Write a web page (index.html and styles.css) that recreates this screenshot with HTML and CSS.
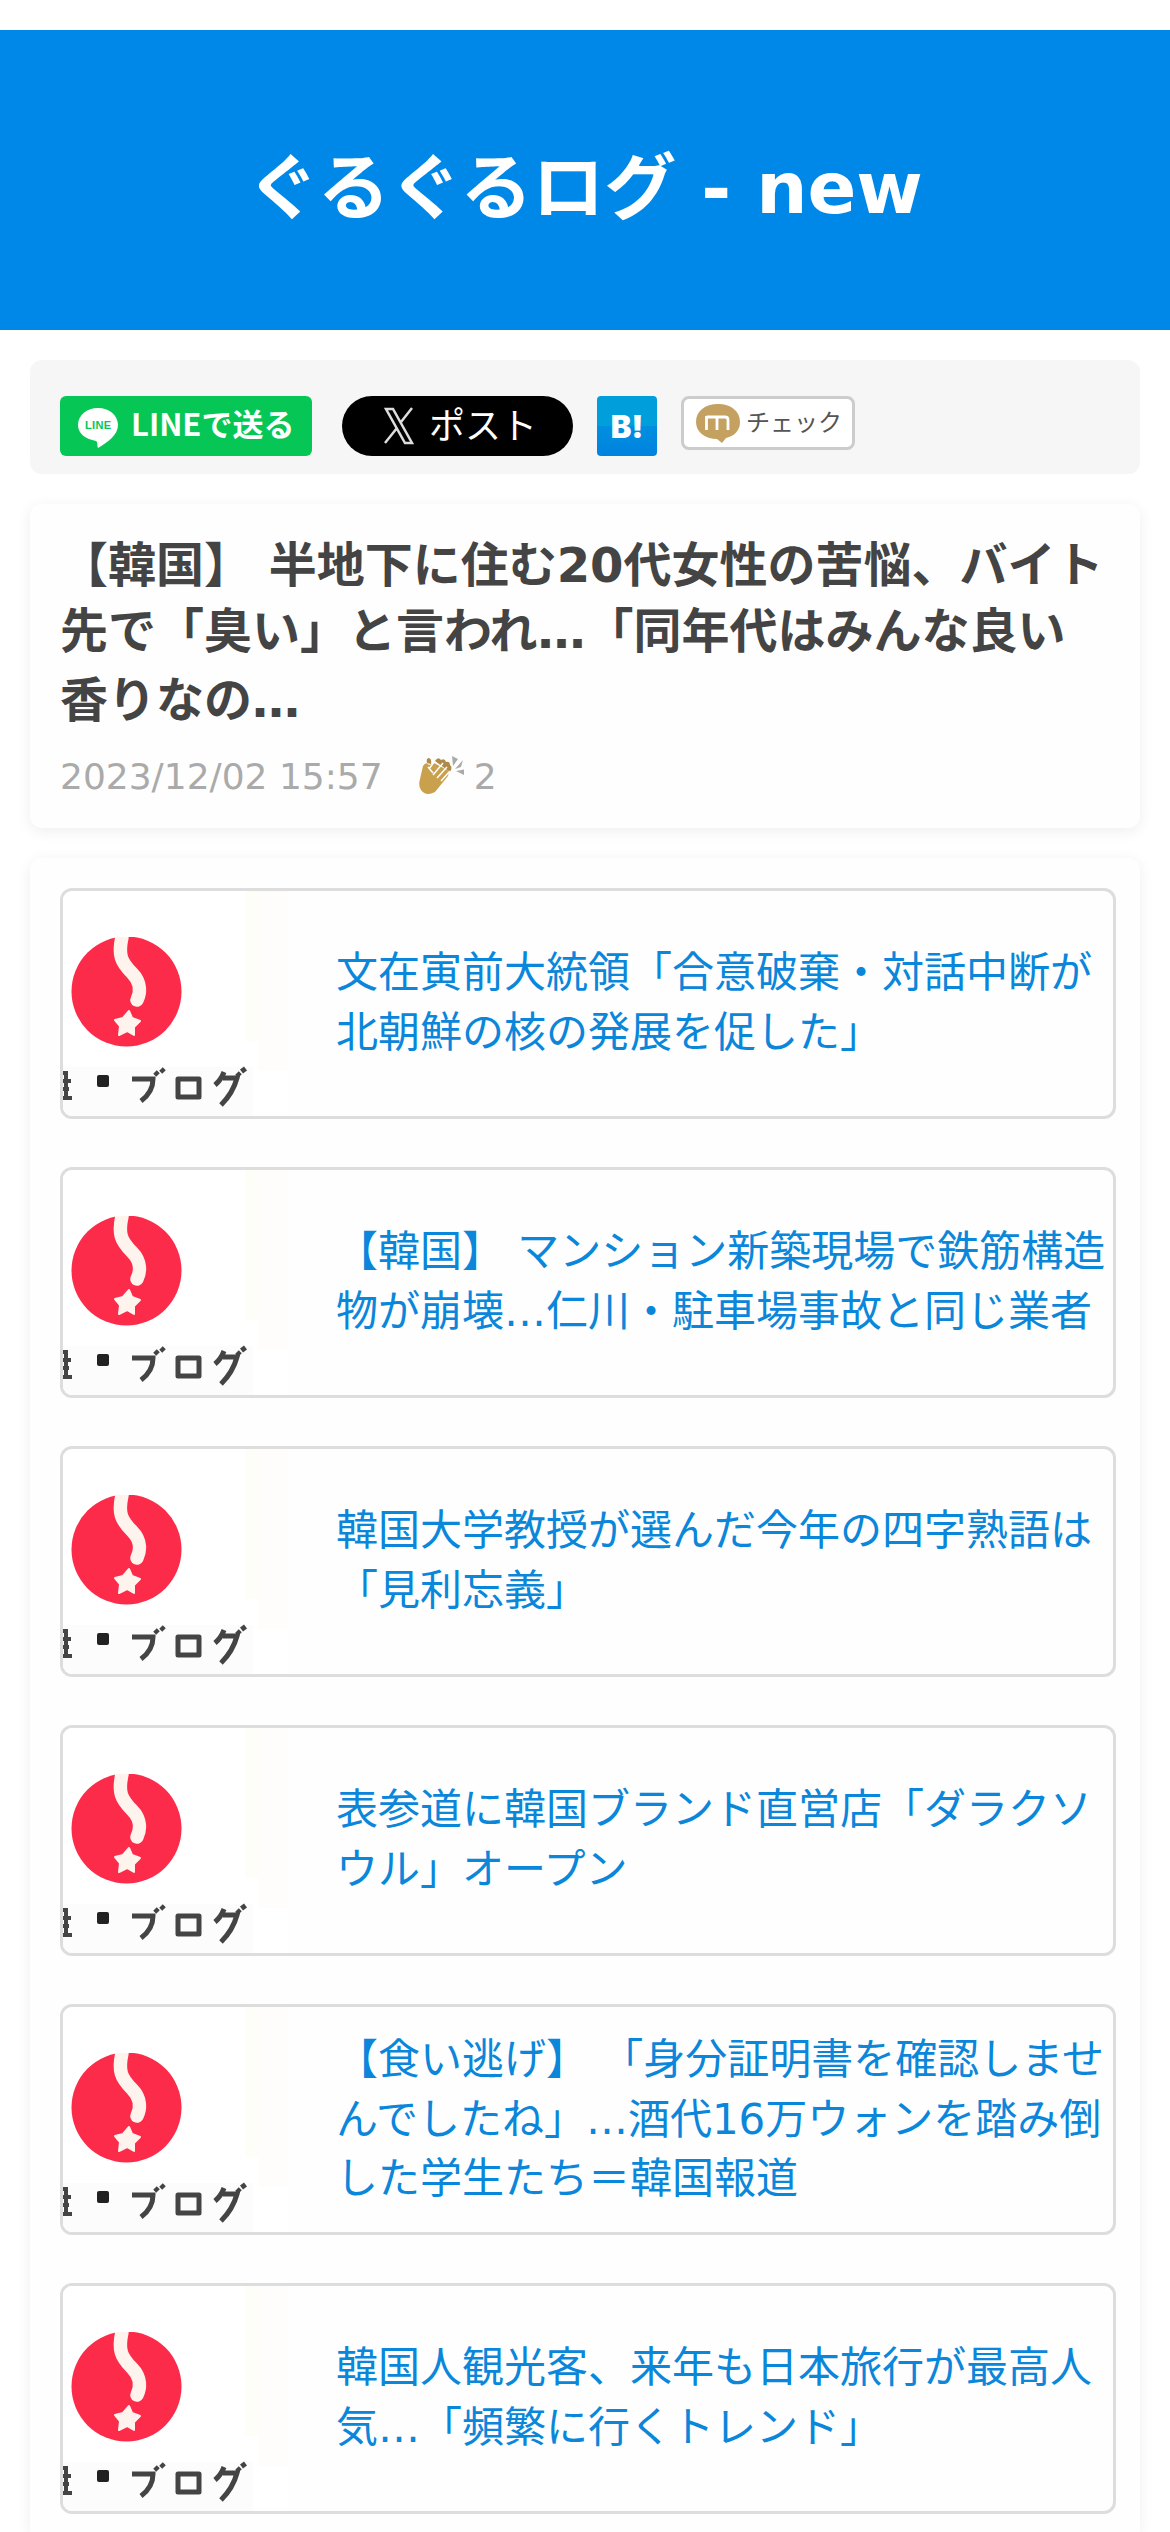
FILE: index.html
```html
<!DOCTYPE html>
<html lang="ja">
<head>
<meta charset="utf-8">
<title>ぐるぐるログ - new</title>
<link rel="stylesheet" href="styles.css">
</head>
<body>
<svg class="defs" width="0" height="0" aria-hidden="true">
  <symbol id="thumb" viewBox="0 0 225 225">
    <rect width="225" height="225" fill="#fff"/>
    <rect x="182" width="13" height="150" fill="#fefef9"/>
    <rect x="195" width="31" height="180" fill="#fffcfc"/>
    <rect y="176" width="190" height="49" fill="#fcfcfc"/>
    <circle cx="63.500" cy="100.500" r="55" fill="#fb2b49"/>
    <path d="M59 46C55 64 58 71 69 82C79 92 77 103 74 109" fill="none" stroke="#fff3ee" stroke-width="13.500" stroke-linecap="round"/>
    <path d="M50 36H70V46H50Z" fill="#fff"/>
    <path d="M66 120L69 127L77 130L71 136L71 144L64 140L56 144L57 135L52 129L60 127Z" fill="#fff3ee" stroke="#fff3ee" stroke-width="2" stroke-linejoin="round"/>
    <rect x="34" y="184" width="12" height="12" rx="2" fill="#222"/>
    <g fill="none" stroke="#444" stroke-width="5">
      <path d="M69 188H90Q90 201 78 210M92 181L95 184M98 178L101 181"/>
      <path d="M115 188H136V206H115Z" stroke-linejoin="round"/>
      <path d="M161 181Q158 189 152 194M160 187H174Q170 202 158 214M174 182L177 185M179 177L182 181"/>
      <path d="M0 182H5M0 190H8M0 198H6M0 207H9M3 180V208" stroke-width="4"/>
    </g>
  </symbol>
</svg>
<header class="site-header"><h1>ぐるぐるログ - new</h1></header>
<main>
  <div class="share">
    <a class="line"><svg viewBox="0 0 40 40" width="40" height="40"><path d="M20 0C9 0 0 7 0 17C0 26 8 31 18 33C20 34 19 38 20 40C30 34 40 27 40 17C40 7 31 0 20 0Z" fill="#fff"/><text x="20" y="21" text-anchor="middle" textLength="26">LINE</text></svg><span>LINEで送る</span></a>
    <a class="x"><svg viewBox="0 0 30 38" width="30" height="38"><path d="M2 2H9L28 36H21ZM28 1L17 15M13 21L1 36" fill="none" stroke="#ddd" stroke-width="2.500"/></svg><span>ポスト</span></a>
    <a class="hatena">B!</a>
    <a class="mixi"><svg viewBox="0 0 44 39" width="44" height="39"><path d="M22 0C9 0 0 7 0 18C0 28 9 35 21 35L26 39L30 34C39 32 44 26 44 18C44 7 35 0 22 0Z" fill="#c4a160"/><path d="M10.500 26V12M10.500 13H29Q32 13 32 16V26M21 13V26" fill="none" stroke="#fff" stroke-width="2.800"/></svg><span>チェック</span></a>
  </div>
  <article class="panel entry">
    <h2><span>【韓国】 半地下に住む20代女性の苦悩、バイト</span><span>先で「臭い」と言われ…「同年代はみんな良い</span><span>香りなの…</span></h2>
    <div class="meta"><time>2023/12/02 15:57</time><svg viewBox="0 0 46 42" width="46" height="42"><path d="M8 8Q7 3 10 3Q13 4 12 9M16 6Q19 1 22 5Q26 3 27 7Q31 6 31 10Q34 12 31 17" fill="#b08a48"/><path d="M1 24L4 11Q7 6 10 10L15 8L30 16L29 21L16 37Q7 42 2 35Q-1 31 1 24Z" fill="#c9a04c"/><path d="M9 12L14 18M15 7L10 14M14 20L24 8M18 23L28 12M22 26L31 16" fill="none" stroke="#fff" stroke-width="1.500"/><path d="M33 1L39 4L34 11ZM44 5L36 14L42 12ZM37 16L45 14.500L45 20Z" fill="#aaa"/></svg><span>2</span></div>
  </article>
  <section class="panel list">
    <a class="card"><svg class="thumb"><use href="#thumb"/></svg><p><span>文在寅前大統領「合意破棄・対話中断が</span><span>北朝鮮の核の発展を促した」</span></p></a>
    <a class="card"><svg class="thumb"><use href="#thumb"/></svg><p><span>【韓国】 マンション新築現場で鉄筋構造</span><span>物が崩壊…仁川・駐車場事故と同じ業者</span></p></a>
    <a class="card"><svg class="thumb"><use href="#thumb"/></svg><p><span>韓国大学教授が選んだ今年の四字熟語は</span><span>「見利忘義」</span></p></a>
    <a class="card"><svg class="thumb"><use href="#thumb"/></svg><p><span>表参道に韓国ブランド直営店「ダラクソ</span><span>ウル」オープン</span></p></a>
    <a class="card"><svg class="thumb"><use href="#thumb"/></svg><p><span>【食い逃げ】 「身分証明書を確認しませ</span><span>んでしたね」…酒代16万ウォンを踏み倒</span><span>した学生たち＝韓国報道</span></p></a>
    <a class="card"><svg class="thumb"><use href="#thumb"/></svg><p><span>韓国人観光客、来年も日本旅行が最高人</span><span>気…「頻繁に行くトレンド」</span></p></a>
  </section>
</main>
</body>
</html>
```
FILE: styles.css
```css
* { box-sizing: border-box; }
body {
  margin: 0;
  padding-top: 30px;
  background: #fff;
  color: #444;
  font-family: "DejaVu Sans", "Noto Sans CJK JP", sans-serif;
}
.defs { position: absolute; }
h1, h2, p { margin: 0; }
.site-header {
  height: 300px;
  padding-top: 16px;
  display: flex;
  align-items: center;
  justify-content: center;
  background: #0088e8;
  color: #fff;
}
.site-header h1 { font-size: 72px; line-height: 100px; }
main { display: flex; flex-direction: column; gap: 30px; height: 2202px; padding: 30px 30px 0; overflow: hidden; }
.share {
  display: flex;
  align-items: flex-start;
  flex: none;
  height: 114px;
  padding: 36px 30px 0;
  border-radius: 12px;
  background: #f6f6f6;
}
.share a { display: flex; align-items: center; height: 60px; white-space: nowrap; }
.share .line {
  width: 252px;
  padding: 0 0 3px 18px;
  gap: 13px;
  border-radius: 6px;
  background: #06c755;
  color: #fff;
  font: bold 31px/40px "Noto Sans CJK JP", sans-serif;
}
.line span { padding-bottom: 4px; }
.line svg { margin-top: 6px; }
.line text { font: bold 11px "Liberation Sans", sans-serif; fill: #06c755; }
.share .x {
  width: 231px;
  margin-left: 30px;
  padding-left: 42px;
  gap: 15px;
  border-radius: 30px;
  background: #000;
  color: #fff;
  font: 400 36px/40px "Noto Sans CJK JP", sans-serif;
}
.x span { padding-bottom: 6px; }
.hatena {
  width: 60px;
  margin-left: 24px;
  justify-content: center;
  border-radius: 4px;
  background: linear-gradient(#009fdc 0 50%, #008fe0 50%, #0083df);
  color: #fff;
  font: 900 31px Inter, sans-serif;
}
.share .mixi {
  width: 174px;
  height: 54px;
  margin-left: 24px;
  padding: 0 0 4px 12px;
  gap: 6px;
  border: 3px solid #ccc;
  border-radius: 8px;
  background: #fff;
  color: #555;
  font: 400 24px/30px "Noto Sans CJK JP", sans-serif;
}
.mixi svg { margin-top: 4px; }
.panel { border-radius: 12px; background: #fefefe; box-shadow: 0 3px 15px rgba(0, 0, 0, .07); }
.entry { flex: none; height: 324px; padding: 28px 30px; }
h2 { font-size: 48px; }
h2 span, p span { display: block; white-space: nowrap; }
h2 span { line-height: 66px; }
h2 span:nth-child(3) { line-height: 72px; }
.meta { display: flex; align-items: center; height: 54px; margin-top: 13px; color: #aaa; font-size: 36px; }
.meta svg { margin: 0 9px 0 36px; }
.list {
  display: flex;
  flex-direction: column;
  gap: 48px;
  flex: 1;
  min-height: 0;
  padding: 30px 24px 0 30px;
  border-radius: 12px 12px 0 0;
}
.card {
  display: flex;
  align-items: center;
  flex: none;
  height: 231px;
  border: 3px solid #ddd;
  border-radius: 12px;
  overflow: hidden;
  color: #0a86da;
  font-size: 42px;
}
.card p { padding-bottom: 2px; }
.thumb { flex: none; width: 225px; height: 225px; margin-right: 48px; }
p span { line-height: 60px; }
p span:nth-child(3) { line-height: 57px; }
```
